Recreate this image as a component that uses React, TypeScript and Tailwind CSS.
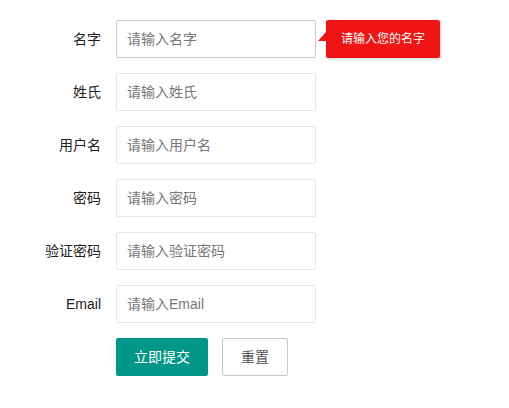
const fields = [
  { label: "名字", placeholder: "请输入名字" },
  { label: "姓氏", placeholder: "请输入姓氏" },
  { label: "用户名", placeholder: "请输入用户名" },
  { label: "密码", placeholder: "请输入密码" },
  { label: "验证密码", placeholder: "请输入验证密码" },
  { label: "Email", placeholder: "请输入Email" },
]

export default function App() {
  return (
    <div
      className="w-[509px] h-[408px] bg-white pt-5 text-[14px] text-[#333]"
      style={{ fontFamily: '"Liberation Sans", "Noto Sans CJK SC", sans-serif' }}
    >
      <form onSubmit={(e) => e.preventDefault()}>
        {fields.map((f, i) => (
          <div key={f.label} className="relative flex items-center mb-[15px]">
            <label className="w-[116px] pr-[15px] text-right leading-[38px] text-[#222]">{f.label}</label>
            <input
              type={f.label === "密码" || f.label === "验证密码" ? "password" : "text"}
              placeholder={f.placeholder}
              autoFocus={i === 0}
              className={`w-[200px] h-[38px] px-[10px] rounded-[2px] border bg-white outline-none placeholder:text-[#777] ${
                i === 0 ? "border-[#c9c9c9]" : "border-[#e6e6e6]"
              }`}
            />
            {i === 0 && (
              <div className="absolute left-[318px] top-0 flex">
                <svg width="8" height="38" viewBox="0 0 8 38" className="block">
                  <polygon points="8,12 0,21 8,21" fill="#f01414" />
                </svg>
                <div className="h-[38px] px-[15px] flex items-center bg-[#f01414] text-white text-[12px] rounded-[2px] shadow-[1px_1px_3px_rgba(0,0,0,0.2)]">
                  请输入您的名字
                </div>
              </div>
            )}
          </div>
        ))}
        <div className="flex pl-[116px] gap-[14px]">
          <button type="submit" className="h-[38px] px-[18px] rounded-[2px] bg-[#009688] text-white">
            立即提交
          </button>
          <button type="reset" className="h-[38px] px-[18px] rounded-[2px] border border-[#c9c9c9] bg-white text-[#555]">
            重置
          </button>
        </div>
      </form>
    </div>
  )
}
